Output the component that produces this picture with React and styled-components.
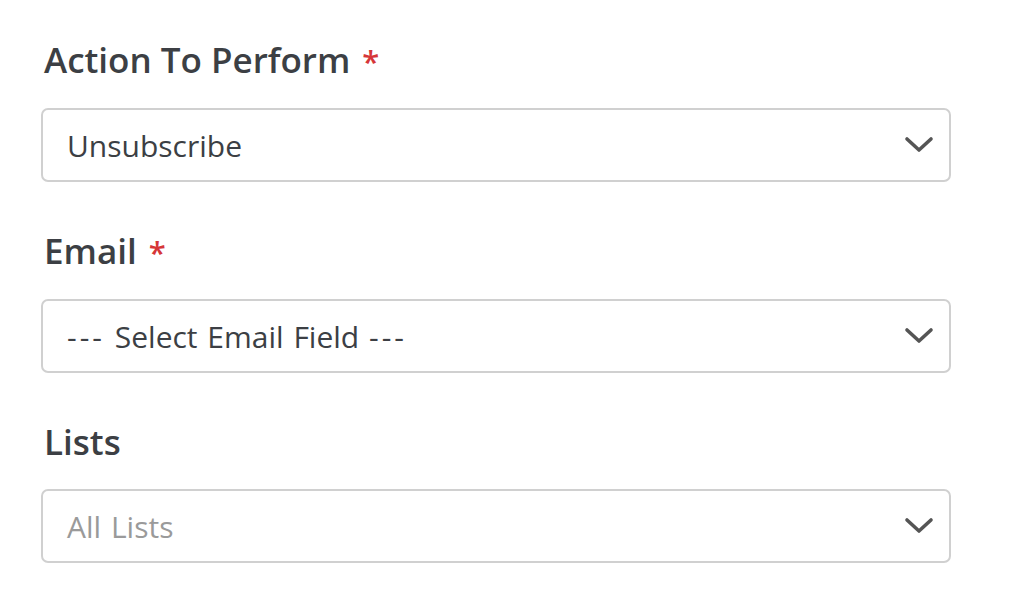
import React from "react";
import styled, { createGlobalStyle } from "styled-components";

const Global = createGlobalStyle`
  html, body { margin: 0; padding: 0; background: #ffffff; }
  body { font-family: "Open Sans", "Noto Sans", sans-serif; }
`;

const Form = styled.div`
  width: 910px;
  padding: 38px 0 0 41px;
  display: flex;
  flex-direction: column;
  gap: 47px;
`;

const Field = styled.div`
  display: flex;
  flex-direction: column;
  gap: 25px;
`;

const Label = styled.div`
  font-size: 35px;
  line-height: 44px;
  font-weight: 600;
  color: #3c3f44;
  padding-left: 3px;
`;

const Required = styled.span`
  color: #d63638;
  margin-left: 12px;
  font-size: 31px;
`;

const SelectBox = styled.div`
  box-sizing: border-box;
  height: 74px;
  border: 2px solid #d0d0d0;
  border-radius: 7px;
  display: flex;
  align-items: center;
  justify-content: space-between;
  padding: 0 15px 0 24px;
  background: #fff;
`;

const Value = styled.span`
  font-size: 30px;
  word-spacing: 2px;
  color: ${(p) => (p.$placeholder ? "#9a9a9a" : "#3c3f44")};
`;

const Dashes = styled.span`
  letter-spacing: 3px;
`;

const Chevron = () => (
  <svg width="30" height="18" viewBox="0 0 30 18">
    <path d="M3 3 L15 14 L27 3" fill="none" stroke="#555" strokeWidth="3.6" strokeLinecap="round" strokeLinejoin="round" />
  </svg>
);

const renderValue = (text) =>
  text.split(/(-+)/).map((part, i) =>
    /^-+$/.test(part) ? <Dashes key={i}>{part}</Dashes> : part
  );

const fields = [
  { label: "Action To Perform", required: true, value: "Unsubscribe" },
  { label: "Email", required: true, value: "--- Select Email Field ---" },
  { label: "Lists", required: false, value: "All Lists", placeholder: true },
];

export default function App() {
  return (
    <>
      <Global />
      <Form>
        {fields.map((f) => (
          <Field key={f.label}>
            <Label>
              {f.label}
              {f.required && <Required>*</Required>}
            </Label>
            <SelectBox>
              <Value $placeholder={f.placeholder}>{renderValue(f.value)}</Value>
              <Chevron />
            </SelectBox>
          </Field>
        ))}
      </Form>
    </>
  );
}
